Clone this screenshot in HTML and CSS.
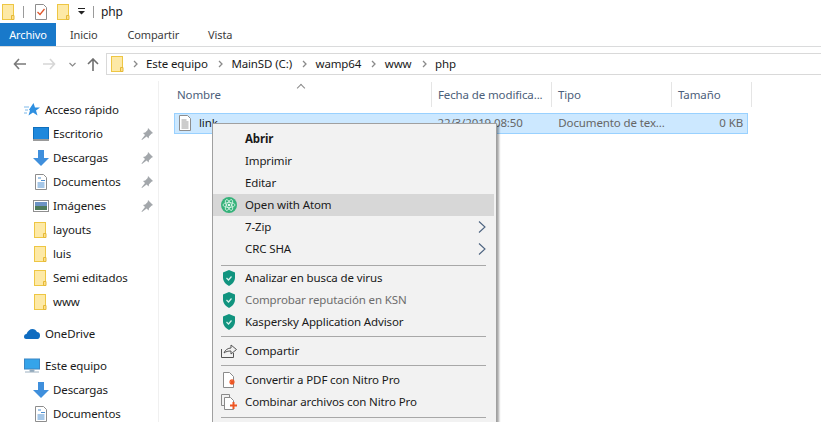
FILE: index.html
```html
<!DOCTYPE html>
<html lang="es">
<head>
<meta charset="utf-8">
<title>php</title>
<link rel="stylesheet" href="styles.css">
</head>
<body>
<svg class="defs" width="0" height="0" aria-hidden="true">
  <symbol id="folder" viewBox="0 0 14 16"><rect x=".5" y=".5" width="11" height="15" fill="#fde9a6" stroke="#eec643"/><path d="M9.500 15.500v-4h2.500v4z" fill="#ffe08a" stroke="#e5b937"/></symbol>
  <symbol id="down" viewBox="0 0 16 16"><path d="M5 0h6v8h5l-8 8-8-8h5z" fill="#3f8fdc"/></symbol>
  <symbol id="pin" viewBox="0 0 12 12"><path d="M7 0l5 5-1.500 .8-2.500 2.500-.4 2.200-2-2L1 12l-.5-.5 3.500-4.500-2-2 2.200-.5 2.500-2.500z" fill="#a3a7ab"/></symbol>
  <symbol id="doc" viewBox="0 0 12 16"><path d="M.5.500h8l3 3v12H.500z" fill="#fff" stroke="#8d8d8d"/><path d="M3 4h3M6 6.500h4M2.500 9h7M2.500 11h7M2.500 13h7" stroke="#4d8fd0"/></symbol>
  <symbol id="shield" viewBox="0 0 14 16"><path d="M7 0l6 2.500v5c0 4-3 7-6 8.500-3-1.500-6-4.500-6-8.500v-5z" fill="#11947f"/><path d="M4.500 8l2 2 3-3.500" fill="none" stroke="#d8f2ec" stroke-width="1.200"/></symbol>
  <symbol id="chev" viewBox="0 0 8 12"><path d="M1 .5L7 6l-6 5.500" fill="none" stroke="#4d6480" stroke-width="1.100"/></symbol>
  <symbol id="crumb" viewBox="0 0 5 8"><path d="M1 1l3 3-3 3" fill="none" stroke="#8a8a8a" stroke-width="1.300"/></symbol>
</svg>

<header class="titlebar">
  <svg class="ico-folder-lg"><use href="#folder"/></svg>
  <span class="qsep qsep-a"></span>
  <svg class="qdoc" viewBox="0 0 12 16"><path d="M.5.500h8l3 3v12H.500z" fill="#fff" stroke="#8d8d8d"/><path d="M2.500 8l2.500 2.500L9.500 5" fill="none" stroke="#e0562b" stroke-width="1.300"/></svg>
  <svg class="ico-folder-lg qfolder"><use href="#folder"/></svg>
  <svg class="qdrop" viewBox="0 0 7 7"><path d="M0 0h7v1H0zM0 3h7L3.500 6.500z" fill="#222"/></svg>
  <span class="qsep qsep-b"></span>
  <span class="wintitle">php</span>
</header>

<nav class="tabs">
  <span class="tab tab-file">Archivo</span>
  <span class="tab tab-inicio">Inicio</span>
  <span class="tab tab-compartir">Compartir</span>
  <span class="tab tab-vista">Vista</span>
</nav>

<div class="addressrow">
  <div class="navbtns">
    <svg class="nav-back" viewBox="0 0 13 12"><path d="M6 1L1.500 6 6 11M1.500 6H13" fill="none" stroke="#7a7a7a" stroke-width="1.600"/></svg>
    <svg class="nav-forward" viewBox="0 0 13 12"><path d="M7 1l4.500 5L7 11M11.500 6H0" fill="none" stroke="#d6d6d6" stroke-width="1.600"/></svg>
    <svg class="nav-recent" viewBox="0 0 7 5"><path d="M.5 1L3.500 4l3-3" fill="none" stroke="#8a8a8a" stroke-width="1.200"/></svg>
    <svg class="nav-up" viewBox="0 0 12 13"><path d="M1 6l5-5 5 5M6 1v12" fill="none" stroke="#6f6f6f" stroke-width="1.600"/></svg>
  </div>
  <div class="addressbar">
    <svg class="ico-folder-lg addr-folder"><use href="#folder"/></svg>
    <svg class="crumb"><use href="#crumb"/></svg><span>Este equipo</span>
    <svg class="crumb"><use href="#crumb"/></svg><span>MainSD (C:)</span>
    <svg class="crumb"><use href="#crumb"/></svg><span>wamp64</span>
    <svg class="crumb"><use href="#crumb"/></svg><span>www</span>
    <svg class="crumb"><use href="#crumb"/></svg><span>php</span>
  </div>
</div>

<main class="explorer">
  <aside class="sidebar">
    <div class="side top first">
      <svg class="side-ico" viewBox="0 0 16 16"><path d="M9.500 1l1.500 4.500h5l-4 3 1.500 5-4.500-3-4.500 3 1.500-5-1-.8z" fill="#2e8fe0"/><path d="M0 5h5M1 8h3M0 11h3" stroke="#7db9ea"/></svg>
      <span>Acceso rápido</span>
    </div>
    <div class="side"><svg class="side-ico" viewBox="0 0 16 14"><rect x=".5" y=".5" width="15" height="12" fill="#1e88dc" stroke="#0f6fbd"/><rect y="12" width="16" height="2" fill="#9a9a9a"/></svg><span class="grow">Escritorio</span><svg class="pin"><use href="#pin"/></svg></div>
    <div class="side"><svg class="side-ico"><use href="#down"/></svg><span class="grow">Descargas</span><svg class="pin"><use href="#pin"/></svg></div>
    <div class="side"><svg class="side-ico"><use href="#doc"/></svg><span class="grow">Documentos</span><svg class="pin"><use href="#pin"/></svg></div>
    <div class="side"><svg class="side-ico" viewBox="0 0 16 12"><rect x=".5" y=".5" width="15" height="11" fill="#fff" stroke="#8f8f8f"/><rect x="2" y="2" width="12" height="4" fill="#6c93c4"/><rect x="2" y="6" width="12" height="4" fill="#4d7a5a"/></svg><span class="grow">Imágenes</span><svg class="pin"><use href="#pin"/></svg></div>
    <div class="side"><svg class="side-ico"><use href="#folder"/></svg><span>layouts</span></div>
    <div class="side"><svg class="side-ico"><use href="#folder"/></svg><span>luis</span></div>
    <div class="side"><svg class="side-ico"><use href="#folder"/></svg><span>Semi editados</span></div>
    <div class="side"><svg class="side-ico"><use href="#folder"/></svg><span>www</span></div>
    <div class="side top spaced">
      <svg class="side-ico" viewBox="0 0 16 10"><path d="M0 8c0-2 1-3 2.500-3C3.500 2 6 0 8.500 0c2 0 3.500 1 4.500 3 2 0 3 1.500 3 3.500 0 2-1 3.500-2.500 3.500H2C1 10 0 9 0 8z" fill="#0f6cc0"/></svg>
      <span>OneDrive</span>
    </div>
    <div class="side top spaced">
      <svg class="side-ico" viewBox="0 0 16 15"><rect x=".5" y=".5" width="15" height="10" fill="#35a4ea" stroke="#3a86c4"/><path d="M6 11h4v2H6zM1 13.500h14" fill="#8fa9bf" stroke="#9cb0c0"/></svg>
      <span>Este equipo</span>
    </div>
    <div class="side"><svg class="side-ico"><use href="#down"/></svg><span>Descargas</span></div>
    <div class="side"><svg class="side-ico"><use href="#doc"/></svg><span>Documentos</span></div>
  </aside>

  <section class="files">
    <div class="headers">
      <span class="sort-mark"></span>
      <span class="col col-name">Nombre</span>
      <span class="col col-date">Fecha de modifica...</span>
      <span class="col col-type">Tipo</span>
      <span class="col col-size">Tamaño</span>
    </div>
    <div class="filerow">
      <span class="cell col-name name-cell"><svg class="file-ico" viewBox="0 0 12 16"><path d="M.5.500h8l3 3v12H.500z" fill="#fff" stroke="#8d8d8d"/><path d="M2.500 5h5M2.500 7h7M2.500 9h7M2.500 11h7M2.500 13h7" stroke="#9a9a9a"/></svg>link</span>
      <span class="cell col-date">22/3/2019 08:50</span>
      <span class="cell col-type">Documento de tex...</span>
      <span class="cell col-size size-cell">0 KB</span>
    </div>
  </section>
</main>

<div class="menu">
  <div class="mi strong"><span>Abrir</span></div>
  <div class="mi"><span>Imprimir</span></div>
  <div class="mi"><span>Editar</span></div>
  <div class="mi hover">
    <svg class="mi-ico" viewBox="0 0 16 16"><circle cx="8" cy="8" r="8" fill="#35b27a"/><circle cx="8" cy="8" r="1.300" fill="#e2f7ec"/><g fill="none" stroke="#d8f4e6" stroke-width=".8"><ellipse cx="8" cy="8" rx="6" ry="2.500"/><ellipse cx="8" cy="8" rx="6" ry="2.500" transform="rotate(60 8 8)"/><ellipse cx="8" cy="8" rx="6" ry="2.500" transform="rotate(120 8 8)"/></g></svg>
    <span>Open with Atom</span>
  </div>
  <div class="mi"><span class="grow">7-Zip</span><svg class="chev"><use href="#chev"/></svg></div>
  <div class="mi"><span class="grow">CRC SHA</span><svg class="chev"><use href="#chev"/></svg></div>
  <hr class="msep sep-a">
  <div class="mi"><svg class="mi-ico shield"><use href="#shield"/></svg><span>Analizar en busca de virus</span></div>
  <div class="mi disabled"><svg class="mi-ico shield"><use href="#shield"/></svg><span>Comprobar reputación en KSN</span></div>
  <div class="mi"><svg class="mi-ico shield"><use href="#shield"/></svg><span>Kaspersky Application Advisor</span></div>
  <hr class="msep sep-b">
  <div class="mi"><svg class="mi-ico" viewBox="0 0 16 14"><path d="M.5 5v8.500h12V9M3 9c1-3 4-5 7-5V1l5.500 4.500L10 10V7c-3 0-5 .5-7 2z" fill="none" stroke="#555"/></svg><span>Compartir</span></div>
  <hr class="msep sep-b">
  <div class="mi"><svg class="mi-ico" viewBox="-2 0 16 16"><path d="M.5.500h6l4 4v11H.500z" fill="#fff" stroke="#8a8a8a"/><path d="M9 7v6M6 10h6M7 8l4 4M11 8l-4 4" stroke="#ee5522" stroke-width="1.200"/></svg><span>Convertir a PDF con Nitro Pro</span></div>
  <div class="mi"><svg class="mi-ico" viewBox="0 0 16 16"><path d="M.5.500h8v3M.5.500v11h3" fill="none" stroke="#8a8a8a"/><path d="M3.500 3.500h6l3 3v9h-9z" fill="#fff" stroke="#8a8a8a"/><path d="M12.500 8v7M9 11.500h7" stroke="#ee5522" stroke-width="2"/></svg><span>Combinar archivos con Nitro Pro</span></div>
  <hr class="msep sep-c">
</div>
</body>
</html>
```

FILE: styles.css
```css
* { box-sizing: border-box; }
html, body { margin: 0; height: 422px; overflow: hidden; }
body {
  position: relative;
  width: 821px;
  background: #fff;
  color: #1a1a1a;
  font: 11.5px/16px "Noto Sans", "Open Sans", sans-serif;
  letter-spacing: -.12px;
}
.defs { position: absolute; }
svg { display: block; flex: none; }

.titlebar { height: 23px; display: flex; align-items: center; padding-left: 2px; }
.ico-folder-lg { width: 14px; height: 16px; }
.qsep { width: 1px; height: 12px; background: #9a9a9a; }
.qsep-a { margin-left: 7px; }
.qdoc { width: 12px; height: 16px; margin-left: 11px; }
.qfolder { margin-left: 10px; }
.qdrop { width: 7px; height: 7px; margin-left: 7px; }
.qsep-b { margin-left: 8px; }
.wintitle { margin-left: 7px; font-size: 12px; }

.tabs { height: 24px; display: flex; align-items: center; border-bottom: 1px solid #dadbdc; font-size: 11px; color: #3c3c3c; }
.tab { display: flex; align-items: center; height: 23px; }
.tab-file { width: 56px; justify-content: center; background: #1979ca; color: #fff; }
.tab-inicio { margin-left: 14px; }
.tab-compartir { margin-left: 30px; }
.tab-vista { margin-left: 29px; }

.addressrow { height: 34px; display: flex; padding-top: 6px; align-items: flex-start; }
.navbtns { width: 106px; height: 22px; display: flex; align-items: center; padding-left: 13px; }
.nav-back, .nav-forward { width: 13px; height: 12px; }
.nav-forward { margin-left: 17px; }
.nav-recent { width: 7px; height: 5px; margin-left: 13px; }
.nav-up { width: 12px; height: 13px; margin-left: 11px; }
.addressbar {
  flex: 1; height: 22px; display: flex; align-items: center;
  border: 1px solid #d9d9d9; border-right: 0; padding-left: 4px;
}
.addr-folder { margin-right: -2.500px; }
.crumb { width: 5px; height: 8px; margin: 0 8.500px 0 10px; }

.explorer { display: flex; height: 341px; }
.sidebar { width: 159px; border-right: 1px solid #f0f0f0; padding: 17px 0 0; overflow: hidden; flex: none; }
.side { height: 24px; display: flex; align-items: center; padding: 0 4px 0 33px; }
.side.top { padding-left: 24px; }
.side.spaced { margin-top: 8px; }
.side > span { margin-left: 4px; }
.side.top > span { margin-left: 5px; }
.side-ico { width: 16px; height: 16px; }
.side > .grow { flex: 1; }
.pin { width: 12px; height: 12px; margin-right: 1px; }

.files { flex: 1; padding: 1px 0 0 15px; position: relative; }
.headers, .filerow { display: flex; width: 578px; }
.headers { height: 25px; color: #4c607a; }
.sort-mark {
  position: absolute; left: 139px; top: 4px; width: 6px; height: 6px;
  border: solid #8a8a8a; border-width: 1px 0 0 1px; transform: rotate(45deg);
}
.col, .cell { display: flex; align-items: center; padding-left: 6px; }
.col { border-right: 1px solid #e5e5e5; }
.col-name { width: 258px; padding-left: 3px; }
.col-date { width: 120px; }
.col-type { width: 120px; }
.col-size { width: 80px; }
.filerow {
  margin-top: 6px; height: 21px; width: 574px;
  background: #cce8ff; border: 1px solid #99d1ff; color: #666;
  padding-bottom: 1px;
}
.filerow .col-name { width: 257px; }
.filerow .col-size { width: 76px; }
.filerow .col-type { padding-left: 7px; }
.name-cell { color: #1a1a1a; padding-left: 4px; }
.file-ico { width: 12px; height: 16px; margin-right: 8px; }
.size-cell { justify-content: flex-end; padding-right: 4px; }

.menu {
  position: absolute; left: 212px; top: 123px; width: 285px; height: 299px;
  background: #f2f2f2; border: 1px solid #a0a0a0; border-bottom: 0;
  padding: 4px 2px 0 0;
  box-shadow: 2px 2px 2px rgba(0,0,0,.35);
  color: #1a1a1a;
}
.mi { height: 22px; display: flex; align-items: center; padding-left: 32px; padding-right: 8px; position: relative; }
.mi.strong { font-weight: 700; }
.mi.hover { background: #d7d7d7; }
.mi.disabled { color: #6d6d6d; }
.mi .grow { flex: 1; }
.mi-ico { position: absolute; left: 8px; top: 3px; width: 16px; height: 16px; }
.mi-ico.shield { left: 9px; width: 14px; }
.chev { width: 8px; height: 12px; }
.msep { border: 0; height: 1px; background: #a8a8a8; margin: 0 8px; }
.sep-a { margin-top: 5px; margin-bottom: 1px; }
.mi + .sep-b { margin-top: 3px; margin-bottom: 3px; }
.sep-c { margin-top: 4px; }
```
